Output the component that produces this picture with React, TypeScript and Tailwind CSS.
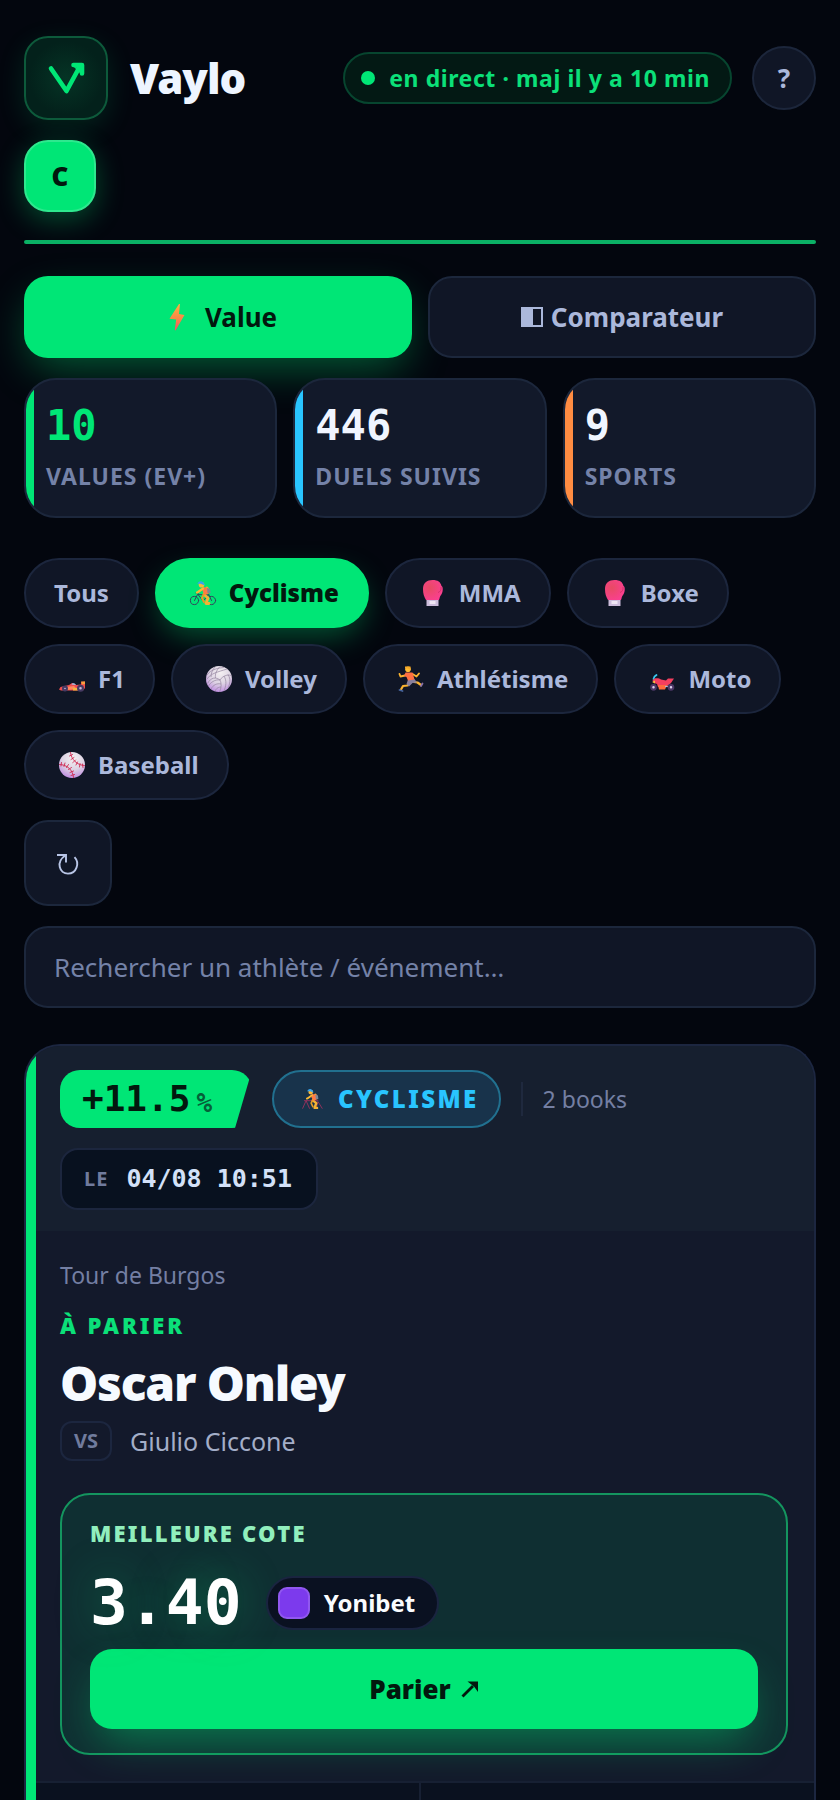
import { useState } from "react";
import type { ReactNode } from "react";

type IconProps = { className?: string };

const LogoMark = () => (
  <svg viewBox="0 0 40 36" className="h-9 w-10" fill="none" stroke="#00e676" strokeLinecap="round" strokeLinejoin="round" aria-hidden="true">
    <path d="M5 8.500 L20.500 31 L33 8" strokeWidth="4.600" />
    <path d="M27.500 5 H36 V13.500" strokeWidth="4.600" />
    <path d="M29 6 L35 5 L35 12 Z" fill="#00e676" strokeWidth="3" />
  </svg>
);

const BoltIcon = ({ className }: IconProps) => (
  <svg viewBox="0 0 28 28" className={className} aria-hidden="true">
    <defs>
      <linearGradient id="bolt" x1="0" y1="0" x2="0" y2="1">
        <stop offset="0" stopColor="#ffb040" />
        <stop offset="0.550" stopColor="#f98746" />
        <stop offset="1" stopColor="#f0506a" />
      </linearGradient>
    </defs>
    <path d="M16 1 L17 1 L16 11 L21.500 12 L12.500 27.500 L11.800 27 L13.200 16.500 L6.500 15.800 Z" fill="url(#bolt)" />
  </svg>
);

const SplitIcon = ({ className }: IconProps) => (
  <svg viewBox="0 0 22 20" className={className} aria-hidden="true">
    <rect x="1" y="1" width="20" height="18" fill="none" stroke="currentColor" strokeWidth="2" />
    <rect x="1" y="1" width="11" height="18" fill="currentColor" />
  </svg>
);

const CyclistIcon = ({ className, muted = false }: IconProps & { muted?: boolean }) => (
  <svg viewBox="0 0 26 26" className={className} fill="none" strokeLinecap="round" strokeLinejoin="round" aria-hidden="true">
    {muted ? (
      <path d="M2 24 L6 15 L10 24 M18 24 L20 16 L25 24 M4 15 H20" stroke="#a5325f" strokeWidth="1" />
    ) : (
      <g stroke="#33445c" strokeWidth="1">
        <circle cx="4.500" cy="20.500" r="4.100" />
        <circle cx="21.500" cy="20.500" r="4.100" />
        <path d="M4.500 20.500 L7.500 14.500 L18.500 15 L13 21 L8 14.500 M18.500 14 L21.500 20.500 M6 13 H8.500" />
      </g>
    )}
    <path d="M17 8 L14 14.500 L18 18 L16 23.500 L19 23.500" stroke="#f4b234" strokeWidth="2.800" />
    <path d="M14 14 L12 18 L14 22" stroke="#e59a26" strokeWidth="2" />
    <path d="M13 7 L19 8 L20 13 L15 15 L12.500 11 Z" fill="#ff7a45" />
    <path d="M17 8 L20 9 L20.500 13 L17.500 13 Z" fill="#7d8794" />
    <path d="M13 8.500 L8 12 L7 12.500" stroke="#fbb836" strokeWidth="2.200" />
    <circle cx="11.500" cy="4.800" r="2.800" fill="#fbb836" />
    <path d="M7.500 4 C7.500 1 13 -0.500 14.500 4.500 L14.500 5.500 C12 4 10 3.500 7.500 4 Z" fill="#36a4ee" />
  </svg>
);

const GloveIcon = ({ className }: IconProps) => (
  <svg viewBox="0 0 26 26" className={className} aria-hidden="true">
    <defs>
      <radialGradient id="glove" cx="0.350" cy="0.400" r="0.700">
        <stop offset="0" stopColor="#e84a63" />
        <stop offset="1" stopColor="#fb3f92" />
      </radialGradient>
    </defs>
    <path d="M6.500 18.500 H18.500 V26 H6.500 Z" fill="#cdbddb" />
    <path d="M9.500 21 H15.500 V24 H9.500 Z" fill="#efe6f4" />
    <path d="M6 20 C4 16.500 3 14 3 9 C3 3 7 0 12.500 0 C18 0 20.500 2 21.500 6 C23.500 6.500 23 13 21 15 C19.500 16.500 20 18 19 20 Z" fill="url(#glove)" />
    <path d="M21 7 C21.500 10 20 12 18 12.500" fill="none" stroke="#c92f66" strokeWidth="0.800" />
  </svg>
);

const RaceCarIcon = ({ className }: IconProps) => (
  <svg viewBox="0 0 26 26" className={className} aria-hidden="true">
    <path d="M0 23.500 L1.500 21 L10 19 L13 17 L17 19 L22 18.500 L22 16 L26 15.500 L26 22 L24 24.500 L2 24.500 Z" fill="#ef4d4f" />
    <path d="M7 21 L15 20 L18 23 L8 24 Z" fill="#ff8a5c" />
    <path d="M14 22 H19 V24.500 H14 Z" fill="#f5b83d" />
    <path d="M22 15.500 H26 V18 L23 18.500 Z" fill="#f7a13c" />
    <path d="M12.500 18.500 C13 16.800 16 16.800 17 19 Z" fill="#a8c3e8" />
    <g stroke="#463a63" strokeWidth="2.200" fill="#c7b9dc">
      <circle cx="6" cy="22.500" r="1.900" />
      <circle cx="21.500" cy="22.200" r="2.400" />
    </g>
  </svg>
);

const BallDefs = ({ id }: { id: string }) => (
  <defs>
    <radialGradient id={id} cx="0.550" cy="0.250" r="0.850">
      <stop offset="0" stopColor="#f4f0f2" />
      <stop offset="0.500" stopColor="#ddd3e3" />
      <stop offset="1" stopColor="#b87be0" />
    </radialGradient>
  </defs>
);

const VolleyIcon = ({ className }: IconProps) => (
  <svg viewBox="0 0 26 26" className={className} aria-hidden="true">
    <BallDefs id="volley" />
    <circle cx="13" cy="13" r="13" fill="url(#volley)" />
    <g fill="none" stroke="#93849f" strokeWidth="0.700">
      <path d="M14 14 C9 13 4 17 2.500 20" />
      <path d="M14 14 C17 9 24 8 25.500 10" />
      <path d="M14 14 C16 18 15 23 13.500 26" />
      <path d="M1 9 C5 3 13 2 18 1.500" />
      <path d="M0.500 13.500 C5 7 12 6 21 3" />
      <path d="M1.500 17.500 C5 11 10 11 14 14" />
      <path d="M9 1 C6 4 5 8 5 11 M14 0.500 C10 5 9 8 9.500 12" />
      <path d="M18 10 C21 15 20 20 18 25 M22 8.500 C25 13 24 18 22 22" />
      <path d="M5 23 C7 19 11 17 15 18 M9 25.500 C10 22 13 21 15 21" />
    </g>
  </svg>
);

const BaseballIcon = ({ className }: IconProps) => (
  <svg viewBox="0 0 26 26" className={className} aria-hidden="true">
    <BallDefs id="baseball" />
    <circle cx="13" cy="13" r="13" fill="url(#baseball)" />
    <g fill="none" stroke="#cf2850" strokeWidth="0.900" strokeLinecap="round">
      <path d="M11.500 0.500 C12 7 18 13.500 25.500 13.500" />
      <path d="M0.500 12.500 C8 12.500 14 18 14.500 25.500" />
      <path d="M10.500 4 L13.500 2.500 M12 7.500 L15 5.500 M14 10.500 L16.500 8 M17 13 L18.500 10 M20.500 15 L21 11.500 M24 15.500 L23.500 12" />
      <path d="M2.500 10.500 L2 14 M6 11 L5 14.500 M9.500 12.500 L7.500 15.500 M12.500 15.500 L9.500 17.500 M14.500 19 L11 20.500 M15.500 22.500 L12 23.500" />
    </g>
  </svg>
);

const RunnerIcon = ({ className }: IconProps) => (
  <svg viewBox="0 0 26 26" className={className} fill="none" strokeLinecap="round" strokeLinejoin="round" aria-hidden="true">
    <path d="M12 16 L9.500 19.500 L5 20 L3 23.500" stroke="#fbb32f" strokeWidth="2.200" />
    <path d="M16 16 L19.500 16.500 L23 19" stroke="#fbb32f" strokeWidth="2.200" />
    <path d="M1.500 24 L4.500 25" stroke="#47649c" strokeWidth="1.800" />
    <path d="M23 20 L24.500 17.500" stroke="#8a72a6" strokeWidth="1.800" />
    <path d="M10 13.500 L16.500 13 L19 16.500 L14.500 17 L11 20.500 L8.500 18 Z" fill="#877f9c" />
    <path d="M7 9.500 L2.500 10.500 L1.500 8" stroke="#fbb32f" strokeWidth="1.900" />
    <path d="M14.500 8 L18.500 10.500 L21 7.500" stroke="#fbb32f" strokeWidth="1.900" />
    <path d="M7.500 6.500 L14.500 6.500 L16.500 13.500 L10 14.500 L8.500 11 L6 10 Z" fill="#ff7042" />
    <circle cx="10" cy="3.300" r="2.800" fill="#ffbc34" />
    <path d="M7 0.500 H12.500 V4 L10 2.500 L7 2.500 Z" fill="#f7a928" />
  </svg>
);

const MotoIcon = ({ className }: IconProps) => (
  <svg viewBox="0 0 26 26" className={className} aria-hidden="true">
    <path d="M4.500 13 L5.500 10.500 L7.500 9" fill="none" stroke="#38c8ee" strokeWidth="1.800" strokeLinecap="round" />
    <path d="M3.500 14.500 C5 11.500 10 12 12 13.500 L17 14.500 L19 12.500 L25 12.500 L22 17 L17 21 H9 L8 18 L5 17 Z" fill="#f43f5f" />
    <path d="M9 19 H18 L16 23.500 H10 Z" fill="#ff6a3d" />
    <path d="M3 16 L6 14.500 L6 17.500 Z" fill="#f7bd43" />
    <path d="M16 20.500 H21" stroke="#a9b8d8" strokeWidth="1.200" />
    <g fill="#dcd0ec" stroke="#4b3766" strokeWidth="2.100">
      <circle cx="4.500" cy="21.300" r="2.300" />
      <circle cx="22" cy="21.300" r="2.300" />
    </g>
  </svg>
);

const ReloadIcon = () => (
  <svg viewBox="0 0 24 24" className="size-6" fill="none" stroke="currentColor" strokeWidth="1.900" aria-hidden="true">
    <path d="M18.500 6.200 C24 12 20.500 22.600 12 22.600 C3.500 22.600 -0.500 11 9.300 4.500" />
    <path d="M1 4 H10 V11.500" />
  </svg>
);

const ArrowIcon = () => (
  <svg viewBox="0 0 18 18" className="size-[18px]" aria-hidden="true">
    <path d="M1.500 16.500 L12 6" stroke="currentColor" strokeWidth="2.800" />
    <path d="M6.500 1.500 H17 V12 L13 6.500 Z" fill="currentColor" />
  </svg>
);

const sports: { name: string; icon?: (p: IconProps) => ReactNode }[] = [
  { name: "Tous" },
  { name: "Cyclisme", icon: CyclistIcon },
  { name: "MMA", icon: GloveIcon },
  { name: "Boxe", icon: GloveIcon },
  { name: "F1", icon: RaceCarIcon },
  { name: "Volley", icon: VolleyIcon },
  { name: "Athlétisme", icon: RunnerIcon },
  { name: "Moto", icon: MotoIcon },
  { name: "Baseball", icon: BaseballIcon },
];

const stats = [
  { value: "10", label: "VALUES (EV+)", bar: "bg-[#00e676]", text: "text-[#00e676]" },
  { value: "446", label: "DUELS SUIVIS", bar: "bg-[#29c5ff]", text: "text-[#f0f5ff]" },
  { value: "9", label: "SPORTS", bar: "bg-[#ff8c42]", text: "text-[#f0f5ff]" },
];

const Header = () => (
  <header>
    <div className="flex flex-wrap items-center gap-5 pb-7">
      <div className="mr-auto flex items-center gap-[22px]">
        <div className="flex size-[84px] items-center justify-center rounded-3xl border-2 border-[#0d5a3b] bg-[radial-gradient(circle,#053425,#03211b_65%)] shadow-[0_8px_28px_rgba(0,230,118,0.14)]">
          <LogoMark />
        </div>
        <h1 className="text-[42px] leading-none font-black tracking-tight text-[#eef5ff]">Vaylo</h1>
      </div>
      <div className="flex h-[52px] items-center gap-3.5 rounded-full border-2 border-[#07452f] bg-[#031914] pr-5 pl-4 text-[23px] font-bold tracking-wide text-[#0be079]">
        <span className="size-3.5 rounded-full bg-[#00e676]" />
        en direct · maj il y a 10 min
      </div>
      <button type="button" aria-label="Aide" className="size-16 rounded-full border-2 border-[#1c263b] bg-[#101626] text-[26px] font-bold text-[#abb8db]">
        ?
      </button>
      <button type="button" aria-label="Compte" className="size-[72px] rounded-3xl border-2 border-[#2ee88e] bg-[#00e676] text-[26px] font-black text-[#02180e] shadow-[0_8px_28px_rgba(0,230,118,0.3)]">
        C
      </button>
    </div>
    <div className="h-1 rounded-full bg-[#0bb065]" />
  </header>
);

const Stats = () => (
  <section className="mt-5 grid grid-cols-3 gap-4">
    {stats.map((s) => (
      <div key={s.label} className="flex h-[140px] overflow-hidden rounded-[32px] border-2 border-[#1c273c] bg-[#12192a]">
        <span className={`w-2 shrink-0 ${s.bar}`} />
        <div className="pt-6 pl-3">
          <p className={`font-['DejaVu_Sans_Mono',monospace] text-[42px] leading-[44px] font-bold ${s.text}`}>{s.value}</p>
          <p className="mt-3 text-[23px] leading-8 font-bold tracking-[1px] whitespace-nowrap text-[#7482a8]">{s.label}</p>
        </div>
      </div>
    ))}
  </section>
);

const BetCard = () => (
  <article className="mt-9 flex flex-1 overflow-hidden rounded-t-[36px] border-2 border-b-0 border-[#1c2640] bg-[#13192b]">
    <div className="w-2.5 shrink-0 bg-[#00e676]" />
    <div className="flex flex-1 flex-col">
      <div className="flex flex-wrap items-center gap-5 bg-[#161f2f] px-6 pt-6 pb-[21px]">
        <div className="flex h-[58px] items-center gap-1.5 rounded-[20px] bg-[#00e676] pr-10 pl-[22px] font-['DejaVu_Sans_Mono',monospace] text-[36px] font-bold text-[#02180e] [clip-path:polygon(0_0,100%_0,calc(100%-17px)_100%,0_100%)]">
          +11.5<span className="pt-2 text-[26px] text-[#055f38]">%</span>
        </div>
        <div className="flex h-[58px] items-center gap-2 rounded-full border-2 border-[#21708f] bg-[#18334b] px-5 text-[24px] font-black tracking-widest text-[#29c5ff]">
          <CyclistIcon muted className="h-[22px] w-9" />
          CYCLISME
        </div>
        <div className="h-[34px] w-0.5 bg-[#1f293e]" />
        <p className="text-[23px] text-[#747fa3]">2 books</p>
        <div className="flex h-[62px] items-center gap-[18px] rounded-[18px] border-2 border-[#1c263e] bg-[#08111f] pr-6 pl-[22px]">
          <span className="text-[20px] font-bold tracking-wider text-[#707b9d]">LE</span>
          <time className="font-['DejaVu_Sans_Mono',monospace] text-[25px] font-bold text-[#d3e1f8]">04/08 10:51</time>
        </div>
      </div>

      <div className="pt-6 pr-[26px] pb-[26px] pl-6">
        <p className="text-[23px] leading-10 text-[#747fa3]">Tour de Burgos</p>
        <p className="mt-3.5 text-[22px] leading-8 font-black tracking-[0.13em] text-[#0be079]">À PARIER</p>
        <h2 className="mt-2 mb-1 text-[48px] leading-[68px] font-black tracking-tight text-[#f6faff]">Oscar Onley</h2>
        <div className="flex items-center gap-[18px]">
          <span className="flex h-10 items-center rounded-xl border-2 border-[#1c263f] px-3 text-[20px] font-bold text-[#707b9d]">VS</span>
          <span className="text-[25px] leading-10 text-[#a3aec8]">Giulio Ciccone</span>
        </div>

        <section className="mt-8 rounded-[30px] border-2 border-[#14955f] bg-[#0f2f32] px-7 pt-[22px] pb-6">
          <p className="text-[22px] leading-8 font-black tracking-widest text-[#91efbd]">MEILLEURE COTE</p>
          <div className="mt-3 flex items-center gap-6">
            <span className="font-['DejaVu_Sans_Mono',monospace] text-[63px] leading-[84px] font-bold text-white [text-shadow:0_0_44px_rgba(0,230,118,0.35)]">3.40</span>
            <span className="flex h-[54px] items-center gap-3.5 rounded-full border-2 border-[#1a2440] bg-[#0a1121] pr-[22px] pl-2.5 text-[24px] font-bold text-[#fafcff]">
              <span className="size-8 rounded-[9px] border-2 border-[#9158f0] bg-[#7c3aed]" />
              Yonibet
            </span>
          </div>
          <a href="#parier" className="mt-1 flex h-20 items-center justify-center gap-2.5 rounded-[22px] bg-[#00e676] text-[26px] font-black text-[#02180e] shadow-[0_20px_44px_-10px_rgba(0,230,118,0.42)]">
            Parier <ArrowIcon />
          </a>
        </section>
      </div>

      <div className="grid min-h-4 flex-1 grid-cols-2 border-t-2 border-[#172033] bg-[#0a111f] pr-2">
        <div className="border-r-2 border-[#172033]" />
        <div />
      </div>
    </div>
  </article>
);

export default function App() {
  const [tab, setTab] = useState("value");
  const [sport, setSport] = useState("Cyclisme");
  const [query, setQuery] = useState("");

  const tabStyle = (active: boolean) =>
    `flex h-[82px] items-center justify-center rounded-3xl text-[26px] font-bold ${
      active
        ? "bg-[#00e676] text-[#02180e] shadow-[0_16px_44px_-8px_rgba(0,230,118,0.4)]"
        : "border-2 border-[#1c273c] bg-[#101626] text-[#abb8db]"
    }`;

  return (
    <main className="flex min-h-screen flex-col bg-[#03060e] px-6 pt-9 font-['Noto_Sans','Open_Sans',sans-serif]">
      <Header />

      <nav className="mt-8 grid grid-cols-2 gap-4">
        <button type="button" className={tabStyle(tab === "value")} onClick={() => setTab("value")}>
          <BoltIcon className="mr-2.5 h-7 w-9" />
          Value
        </button>
        <button type="button" className={tabStyle(tab === "compare")} onClick={() => setTab("compare")}>
          <SplitIcon className="mr-2 h-5 w-[22px]" />
          Comparateur
        </button>
      </nav>

      <Stats />

      <div className="mt-10 flex flex-wrap gap-4">
        {sports.map(({ name, icon: Icon }) => (
          <button
            key={name}
            type="button"
            onClick={() => setSport(name)}
            className={`flex h-[70px] items-center gap-2 rounded-full border-2 px-7 text-[24px] ${
              sport === name
                ? "border-[#00e676] bg-[#00e676] font-black text-[#02180e] shadow-[0_12px_32px_-6px_rgba(0,230,118,0.38)]"
                : "border-[#1c263d] bg-[#101626] font-bold text-[#abb8db]"
            }`}
          >
            {Icon && <Icon className="h-[26px] w-9" />}
            {name}
          </button>
        ))}
      </div>

      <button type="button" aria-label="Actualiser" className="mt-5 flex h-[86px] w-[88px] items-center justify-center rounded-3xl border-2 border-[#1c273c] bg-[#101626] text-[#b8c5e6]">
        <ReloadIcon />
      </button>

      <input
        type="search"
        aria-label="Rechercher"
        value={query}
        onChange={(e) => setQuery(e.target.value)}
        placeholder="Rechercher un athlète / événement…"
        className="mt-5 h-[82px] w-full rounded-3xl border-2 border-[#1c273c] bg-[#101626] px-7 text-[26px] text-[#eef5ff] placeholder:text-[#7482a8]"
      />

      <BetCard />
    </main>
  );
}
